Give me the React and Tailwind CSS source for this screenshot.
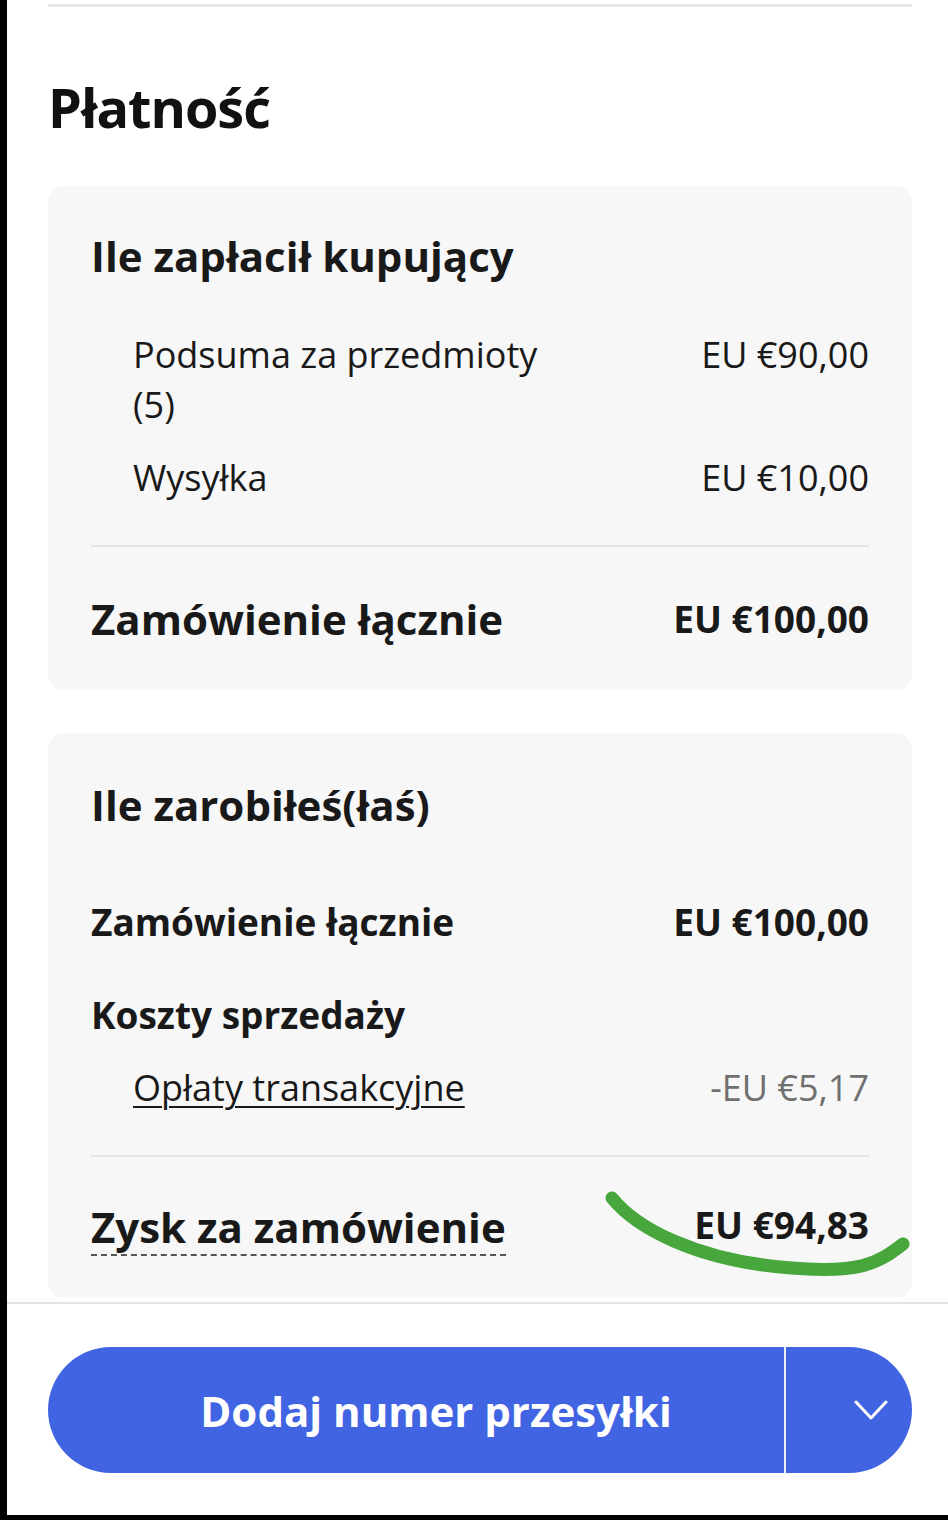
import React from 'react';

const Row = ({ label, value, className = '', labelClass = '', valueClass = '' }) => (
  <div className={`flex justify-between items-start gap-6 ${className}`}>
    <div className={labelClass}>{label}</div>
    <div className={`shrink-0 text-right ${valueClass}`}>{value}</div>
  </div>
);

export default function App() {
  return (
    <div className="w-[948px] h-[1520px] bg-black pl-[7px] pb-[5px] flex flex-col">
      <div className="flex-1 bg-white flex flex-col font-['Open_Sans',sans-serif] text-[#191919]">
        <div className="flex-1 pl-[41px] pr-[36px]">
          <div className="h-[3px] mt-[4px] bg-[#e8e8e8]" />

          <h1 className="mt-[68px] text-[54px] leading-[64px] font-bold tracking-[-1px] text-[#111]">Płatność</h1>

          {/* Ile zapłacił kupujący */}
          <section className="mt-[47px] rounded-2xl bg-[#f7f7f7] px-[43px] pt-[46px] pb-[47px]">
            <h2 className="text-[42px] leading-[48px] font-bold">Ile zapłacił kupujący</h2>

            <Row
              className="mt-[50px] pl-[42px] text-[36px] leading-[50px]"
              labelClass="max-w-[440px]"
              label="Podsuma za przedmioty (5)"
              value="EU €90,00"
            />
            <Row
              className="mt-[23px] pl-[42px] text-[36px] leading-[50px]"
              label="Wysyłka"
              value="EU €10,00"
            />

            <div className="mt-[42px] h-[2px] bg-[#e5e5e5]" />

            <div className="mt-[48px] flex justify-between items-center">
              <div className="text-[42px] leading-[48px] font-bold">Zamówienie łącznie</div>
              <div className="text-[37px] leading-[48px] font-bold">EU €100,00</div>
            </div>
          </section>

          {/* Ile zarobiłeś(łaś) */}
          <section className="relative mt-[43px] rounded-2xl bg-[#f7f7f7] px-[43px] pt-[48px] pb-[42px]">
            <h2 className="text-[42px] leading-[48px] font-bold">Ile zarobiłeś(łaś)</h2>

            <Row
              className="mt-[71px] text-[37px] leading-[44px] font-bold"
              label="Zamówienie łącznie"
              value="EU €100,00"
            />

            <div className="mt-[49px] text-[37px] leading-[44px] font-bold">Koszty sprzedaży</div>

            <Row
              className="mt-[26px] pl-[42px] text-[36px] leading-[50px]"
              label={<span className="underline decoration-2 underline-offset-[5px]">Opłaty transakcyjne</span>}
              value="-EU €5,17"
              valueClass="text-[#707070]"
            />

            <div className="mt-[42px] h-[2px] bg-[#e5e5e5]" />

            <div className="mt-[46px] flex justify-between items-start">
              <span className="inline-block text-[42px] leading-[48px] font-bold pb-[3px] border-b-2 border-dashed border-[#555]">
                Zysk za zamówienie
              </span>
              <span className="text-[37px] leading-[44px] font-bold">EU €94,83</span>
            </div>

            {/* green pen mark */}
            <svg className="absolute inset-0 w-full h-full overflow-visible pointer-events-none" viewBox="0 0 864 565">
              <path
                d="M564 465 C 590 497, 650 526, 732 534 S 830 530, 855 511"
                fill="none"
                stroke="#47a63c"
                strokeWidth="13"
                strokeLinecap="round"
              />
            </svg>
          </section>
        </div>

        <div className="mt-[4px] h-[2px] bg-[#e3e3e3]" />

        <div className="pl-[41px] pr-[36px] pt-[43px] pb-[42px]">
          <div className="h-[126px] rounded-full bg-[#4164e3] flex text-white overflow-hidden">
            <button className="flex-1 flex items-center justify-center pl-[40px] text-[42px] font-bold">
              Dodaj numer przesyłki
            </button>
            <div className="w-[2px] bg-white/90" />
            <button className="w-[126px] flex items-center justify-end pr-[24px]">
              <svg width="34" height="20" viewBox="0 0 34 20" fill="none">
                <path d="M2 2 L17 18 L32 2" stroke="white" strokeWidth="3" strokeLinecap="round" strokeLinejoin="round" />
              </svg>
            </button>
          </div>
        </div>
      </div>
    </div>
  );
}
